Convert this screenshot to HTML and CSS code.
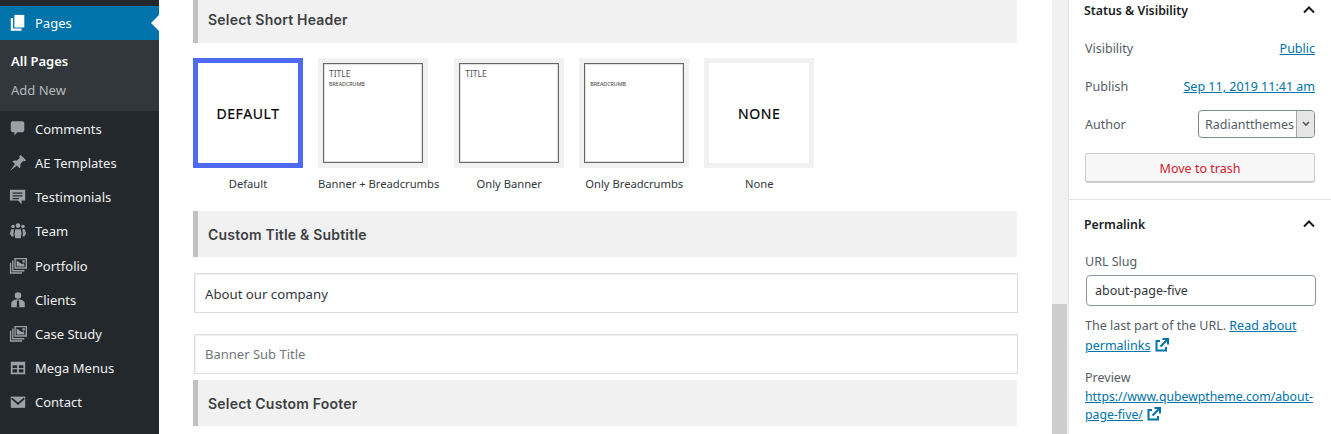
FILE: index.html
```html
<!DOCTYPE html>
<html lang="en">
<head>
<meta charset="utf-8">
<title>Edit Page</title>
<link rel="stylesheet" href="styles.css">
</head>
<body>
<div class="app">
  <nav class="menu">
    <a class="item current">
      <svg class="ico" viewBox="0 0 20 20"><path fill="#fff" d="M6 1h11v14H6z"/><path fill="#fff" d="M2 4.500h2.500V16H14v2.500H2z"/></svg>
      <span>Pages</span>
    </a>
    <div class="sub">
      <a class="sub-link on">All Pages</a>
      <a class="sub-link">Add New</a>
    </div>
    <a class="item">
      <svg class="ico" viewBox="0 0 20 20"><path d="M4 1.500h11c1 0 2 1 2 2v8c0 1-1 2-2 2H9l-3 4v-4H4c-1 0-2-1-2-2v-8c0-1 1-2 2-2z"/></svg>
      <span>Comments</span>
    </a>
    <a class="item">
      <svg class="ico" viewBox="0 0 20 20"><path d="M13 1l6 6-1.500 1-1.700-.6-3.300 3.600c.6 1.600.3 3.200-.7 4.700l-3-3L1 19l5.700-7.800-3-3C5.200 7.200 6.800 6.900 8.400 7.500L12 4.200l-.6-1.700z"/></svg>
      <span>AE Templates</span>
    </a>
    <a class="item">
      <svg class="ico" viewBox="0 0 20 20"><path fill-rule="evenodd" d="M1 2h17v12h-4v4l-4-4H1zM4 5v1.500h11V5zM4 8v1.500h11V8zM4 11v1.500h7V11z"/></svg>
      <span>Testimonials</span>
    </a>
    <a class="item">
      <svg class="ico" viewBox="0 0 20 20"><circle cx="10" cy="4" r="2.600"/><circle cx="4.500" cy="5" r="2"/><circle cx="15.500" cy="5" r="2"/><path d="M7 8h6l1 5-1 5H7l-1-5zM2.500 8h2.800l-.4 5 .4 3H3l-2-3zM14.700 8h2.800l1.500 5-2 3h-1.900l.4-3z"/></svg>
      <span>Team</span>
    </a>
    <a class="item">
      <svg class="ico" viewBox="0 0 20 20"><path fill-rule="evenodd" d="M6 1h14v12H6zM7.500 2.500v9h11v-9zM8.500 10.500V4l6 4 2-1 1 3.500zM15 3.500h2.500V6H15z"/><path d="M3.500 4H5v10.500h12V16H3.500z"/><path d="M1 6.500h1.500v10.500h12v1.500H1z"/></svg>
      <span>Portfolio</span>
    </a>
    <a class="item">
      <svg class="ico" viewBox="0 0 20 20"><circle cx="10" cy="5" r="3.600"/><path d="M2.500 18v-4c0-2.500 2.500-4 5.500-4.500h4c3 .5 5.500 2 5.500 4.500v4z"/><path fill="#23282d" d="M9 10.500h2l.5 7.500h-3z"/></svg>
      <span>Clients</span>
    </a>
    <a class="item">
      <svg class="ico" viewBox="0 0 20 20"><path fill-rule="evenodd" d="M6 1h14v12H6zM7.500 2.500v9h11v-9zM8.500 10.500V4l6 4 2-1 1 3.500zM15 3.500h2.500V6H15z"/><path d="M3.500 4H5v10.500h12V16H3.500z"/><path d="M1 6.500h1.500v10.500h12v1.500H1z"/></svg>
      <span>Case Study</span>
    </a>
    <a class="item">
      <svg class="ico" viewBox="0 0 20 20"><path fill-rule="evenodd" d="M2 3h16v14H2zM4 7v3h5V7zM11 7v3h5V7zM4 11.500V15h5v-3.500zM11 11.500V15h5v-3.500z"/></svg>
      <span>Mega Menus</span>
    </a>
    <a class="item">
      <svg class="ico" viewBox="0 0 20 20"><path d="M2 4h16v12.500H2z"/><path d="M3 6l7 6 7-6" fill="none" stroke="#23282d" stroke-width="2"/></svg>
      <span>Contact</span>
    </a>
  </nav>

  <main class="content">
    <div class="bar"><h2>Select Short Header</h2></div>
    <div class="choices">
      <figure class="choice">
        <div class="thumb selected"><span class="big">DEFAULT</span></div>
        <figcaption>Default</figcaption>
      </figure>
      <figure class="choice">
        <div class="thumb"><div class="page"><span class="t">TITLE</span><span class="c">BREADCRUMB</span></div></div>
        <figcaption>Banner + Breadcrumbs</figcaption>
      </figure>
      <figure class="choice">
        <div class="thumb"><div class="page"><span class="t">TITLE</span></div></div>
        <figcaption>Only Banner</figcaption>
      </figure>
      <figure class="choice">
        <div class="thumb"><div class="page"><span class="t ghost">TITLE</span><span class="c">BREADCRUMB</span></div></div>
        <figcaption>Only Breadcrumbs</figcaption>
      </figure>
      <figure class="choice">
        <div class="thumb"><span class="big">NONE</span></div>
        <figcaption>None</figcaption>
      </figure>
    </div>
    <div class="bar low"><h2>Custom Title &amp; Subtitle</h2></div>
    <div class="field first">About our company</div>
    <div class="field ph">Banner Sub Title</div>
    <div class="bar low"><h2>Select Custom Footer</h2></div>
  </main>

  <div class="scroll"><div class="thumbbar"></div></div>

  <aside class="side">
    <section class="panel status">
      <header class="phead"><h3>Status &amp; Visibility</h3>
        <svg class="chev" viewBox="0 0 12 8"><path d="M1 6.500l5-5 5 5" fill="none" stroke="#191e23" stroke-width="2"/></svg>
      </header>
      <div class="row r1"><span>Visibility</span><a>Public</a></div>
      <div class="row r2"><span>Publish</span><a>Sep 11, 2019 11:41 am</a></div>
      <div class="row r3"><span>Author</span>
        <div class="select"><span>Radiantthemes</span><i class="arrow"><svg viewBox="0 0 8 6"><path d="M1 1l3 3 3-3" fill="none" stroke="#555" stroke-width="1.600"/></svg></i></div>
      </div>
      <div class="trash">Move to trash</div>
    </section>
    <section class="panel perma">
      <header class="phead"><h3>Permalink</h3>
        <svg class="chev" viewBox="0 0 12 8"><path d="M1 6.500l5-5 5 5" fill="none" stroke="#191e23" stroke-width="2"/></svg>
      </header>
      <div class="lbl">URL Slug</div>
      <div class="slug">about-page-five</div>
      <p class="help">The last part of the URL. <a>Read about permalinks</a>
        <svg class="ext" viewBox="0 0 14 14"><path d="M5 3H1.500v9.500H11V9" fill="none" stroke="#0073aa" stroke-width="2"/><path d="M5.500 8.500L12 2M7.500 1H13v5.500" fill="none" stroke="#0073aa" stroke-width="2"/></svg>
      </p>
      <div class="lbl prev">Preview</div>
      <p class="url"><a>https://www.qubewptheme.com/about-page-five/</a>
        <svg class="ext" viewBox="0 0 14 14"><path d="M5 3H1.500v9.500H11V9" fill="none" stroke="#0073aa" stroke-width="2"/><path d="M5.500 8.500L12 2M7.500 1H13v5.500" fill="none" stroke="#0073aa" stroke-width="2"/></svg>
      </p>
    </section>
  </aside>
</div>
</body>
</html>
```
FILE: styles.css
```css
* { box-sizing: border-box; }
html, body { margin: 0; height: 434px; overflow: hidden; background: #fff; }
body { font-family: "Noto Sans", "Open Sans", sans-serif; font-size: 12.500px; color: #32373c; }
a { color: #0073aa; text-decoration: underline; }
h2, h3, p, figure { margin: 0; }

.app { display: flex; height: 434px; overflow: hidden; }

.menu { width: 159px; flex: none; background: #23282d; padding-top: 6px; height: 434px; }
.item { display: flex; align-items: center; height: 34.150px; padding-top: 2px; color: #eee; text-decoration: none; font-size: 13px; position: relative; padding-left: 9px; gap: 8px; }
.item span { line-height: 30px; }
.ico { width: 18px; height: 18px; flex: none; fill: #9ca1a6; }
.current { background: #0073aa; color: #fff; height: 34px; padding-top: 0; }
.current::after { content: ""; position: absolute; right: 0; top: 9px; border: 8px solid transparent; border-right-color: #fff; border-left-width: 0; }
.sub { background: #32373c; height: 71px; padding-top: 7px; }
.sub-link { display: block; height: 29px; line-height: 28px; padding-left: 11px; color: #b4b9be; text-decoration: none; font-size: 13px; }
.sub-link.on { color: #fff; font-weight: 600; }

.content { width: 893px; flex: none; padding: 0 34px; margin-top: -3px; }
.bar { width: 824px; height: 46px; background: #f1f1f1; border-left: 5px solid #c1c1c1; display: flex; align-items: center; padding-left: 10px; }
.bar h2 { font-family: Inter, "Noto Sans", sans-serif; font-size: 14px; font-weight: 600; letter-spacing: .2px; color: #3d3f42; line-height: 44px; }
.bar.low h2 { padding-top: 2px; }
.choices { display: flex; gap: 15px; margin-top: 15px; height: 153px; }
.choice { display: flex; flex-direction: column; align-items: center; }
.choice .thumb { align-self: flex-start; }
.choice figcaption { font-size: 11.200px; line-height: 16px; margin-top: 8px; color: #32373c; white-space: nowrap; }
.thumb { width: 110px; height: 110px; border: 5px solid #f1f1f1; display: flex; align-items: center; justify-content: center; background: #fff; }
.thumb.selected { border-color: #4f6bf5; }
.big { font-weight: 400; font-size: 14px; letter-spacing: .6px; color: #000; -webkit-text-stroke: .2px #000; }
.page { width: 100px; height: 100px; border: 1px solid #666; box-shadow: inset 0 0 0 1px rgba(102,102,102,.2); padding: 4px 5px; display: flex; flex-direction: column; align-items: flex-start; }
.t { font-size: 8.500px; line-height: 11px; color: #555; }
.t.ghost { visibility: hidden; }
.c { font-size: 5.300px; line-height: 7px; margin-top: 2px; color: #555; -webkit-text-stroke: .1px #555; }
.field { width: 824px; height: 40px; margin-left: 1px; border: 1px solid #dedede; box-shadow: inset 1px 1px 0 #f1f1f1; padding-left: 10px; line-height: 40px; font-size: 13.200px; color: #32373c; }
.field.first { margin-top: 16px; }
.field.ph { margin-top: 21px; margin-bottom: 6px; color: #72777c; font-size: 13px; line-height: 38px; }

.scroll { width: 16px; flex: none; background: #f0f0f0; height: 434px; display: flex; flex-direction: column; justify-content: flex-end; }
.thumbbar { height: 130px; width: 15px; background: #cdcdcd; }

.side { width: 263px; flex: none; border-left: 1px solid #e2e4e7; }
.panel { padding: 0 16px; }
.status { height: 200px; border-bottom: 1px solid #e2e4e7; }
.phead { display: flex; justify-content: space-between; align-items: center; height: 20px; }
.phead h3 { font-size: 12.300px; font-weight: 600; color: #191e23; margin-left: -1px; }
.chev { width: 12px; height: 8px; }
.row { display: flex; justify-content: space-between; align-items: center; color: #555d66; height: 28px; width: 230px; }
.r1 { margin-top: 14px; }
.r2 { margin-top: 10px; }
.r3 { margin-top: 10px; }
.select { width: 117px; height: 28px; border: 1px solid #7e8993; border-radius: 4px; display: flex; align-items: center; overflow: hidden; padding-left: 6px; justify-content: space-between; }
.arrow { width: 18px; height: 26px; flex: none; background: #e6e6e6; border-left: 1px solid #a5a5a5; display: flex; align-items: center; justify-content: center; }
.arrow svg { width: 8px; height: 6px; }
.trash { width: 230px; height: 30px; margin-top: 15px; background: #f7f7f7; border: 1px solid #ccc; border-bottom-width: 2px; border-radius: 3px; text-align: center; line-height: 29px; color: #d0202f; }
.perma { padding-top: 14px; }
.perma .lbl { color: #555d66; }
.lbl { margin-top: 19px; line-height: 18px; }
.slug { width: 230px; height: 31px; margin: 4px 0 0 1px; border: 1px solid #8d96a0; border-radius: 4px; padding-left: 8px; line-height: 29px; color: #32373c; }
.help { margin-top: 10px; line-height: 20px; color: #555d66; width: 230px; }
.ext { width: 14px; height: 14px; vertical-align: -2px; margin-left: 1px; }
.lbl.prev { margin-top: 13px; }
.url { margin-top: 1px; line-height: 18px; width: 230px; font-size: 12.250px; }
```
